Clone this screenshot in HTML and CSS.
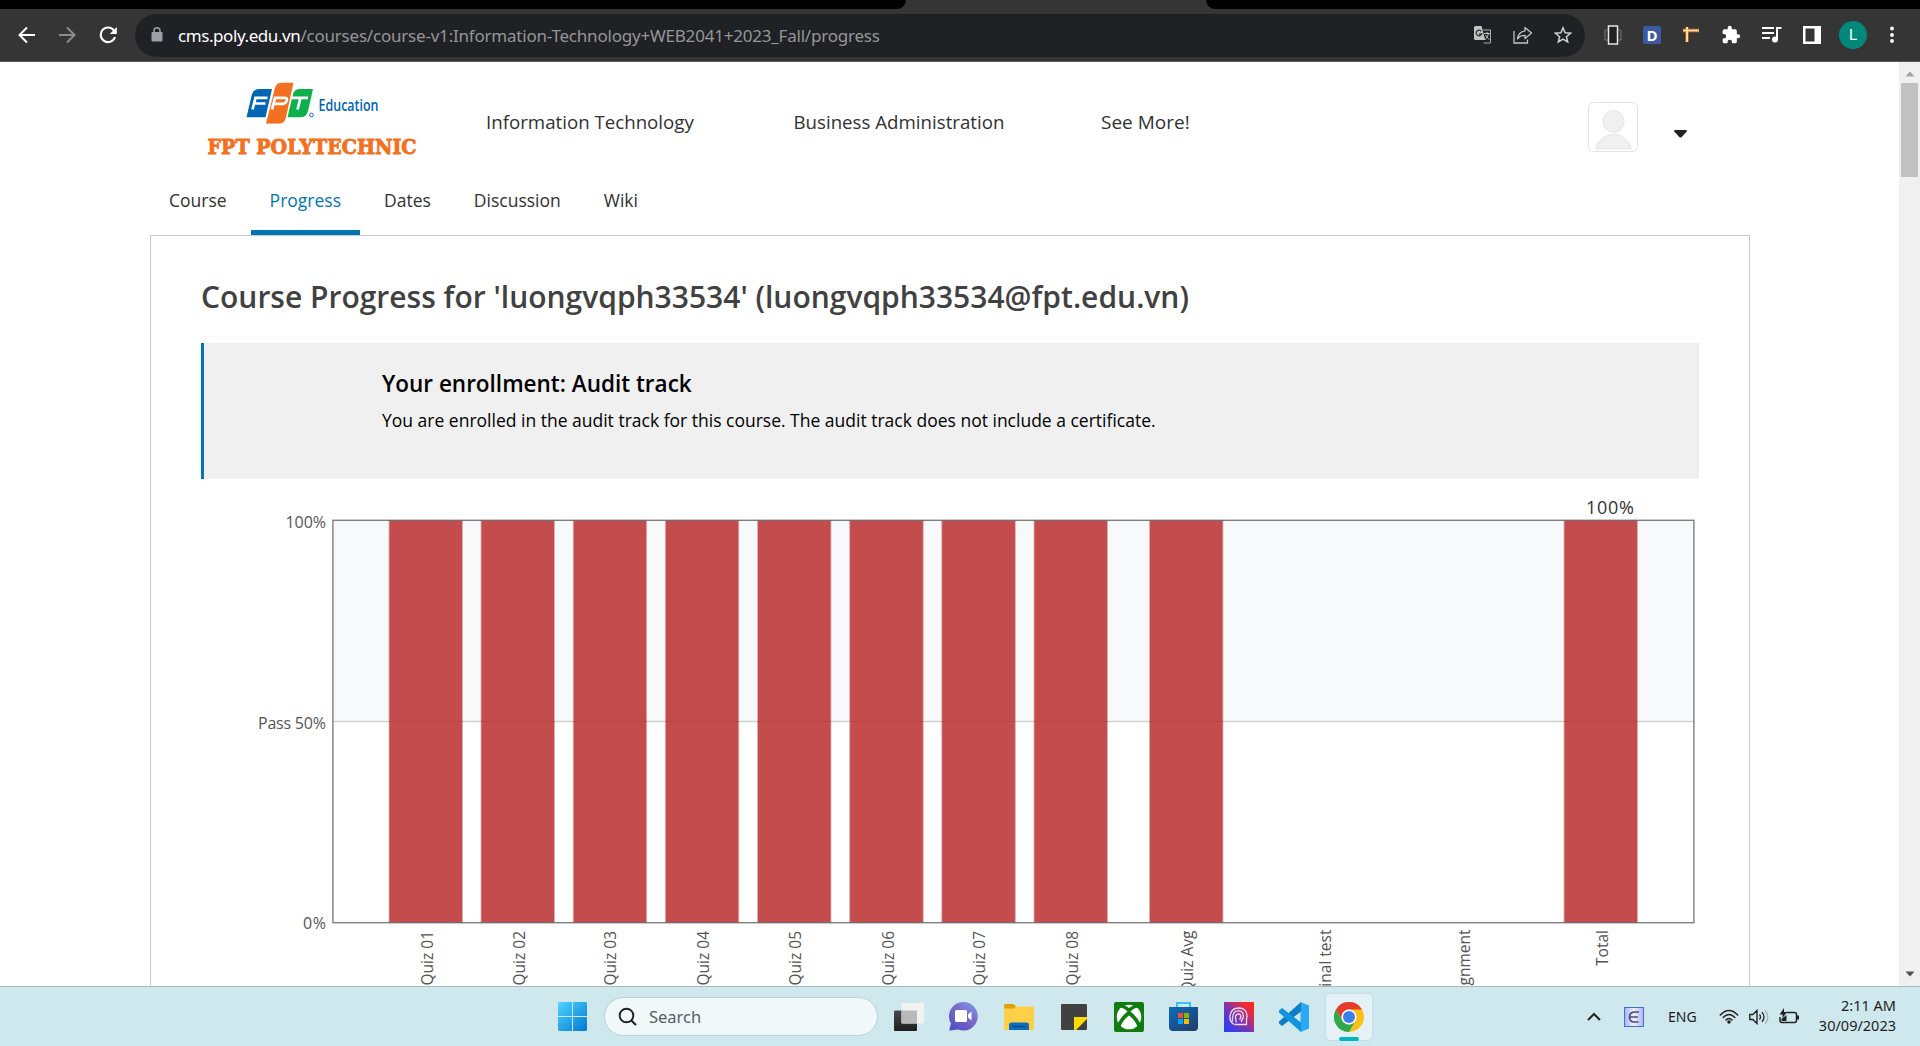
FILE: index.html
```html
<!DOCTYPE html>
<html lang="en">
<head>
<meta charset="utf-8">
<title>Progress</title>
<link rel="stylesheet" href="styles.css">
</head>
<body>
<div class="tabstrip"><div class="strip-left"></div><div class="strip-right"></div></div>
<div class="toolbar">
  <svg class="nav-back" width="18" height="18" viewBox="0 0 18 18"><path d="M17 9H2M9 1.500L1.500 9L9 16.500" fill="none" stroke="#fff" stroke-width="2"/></svg>
  <svg class="nav-fwd" width="18" height="18" viewBox="0 0 18 18"><path d="M1 9h15M9 1.500L16.500 9L9 16.500" fill="none" stroke="#8b8b8b" stroke-width="2"/></svg>
  <svg class="nav-reload" width="18" height="18" viewBox="0 0 18 18"><path d="M15.300 5A7.300 7.300 0 1 0 16 11" fill="none" stroke="#fff" stroke-width="2.100"/><path d="M17.800 1v7h-7z" fill="#fff"/></svg>
  <div class="omnibox">
    <svg width="12" height="16" viewBox="0 0 12 16"><rect x=".5" y="5" width="11" height="9.500" rx="1" fill="#9aa0a6"/><path d="M3 6V3.800a3 3 0 0 1 6 0V6" fill="none" stroke="#9aa0a6" stroke-width="1.500"/></svg>
    <div class="url"><span class="host">cms.poly.edu.vn</span>/courses/course-v1:Information-Technology+WEB2041+2023_Fall/progress</div>
    <div class="omni-icons">
      <svg width="18" height="18" viewBox="0 0 18 18"><path d="M9 4h7.500v13H9.500" fill="none" stroke="#aaa"/><path d="M1.500 0h6l3.700 14H1.500A1.500 1.500 0 0 1 0 12.500v-11A1.500 1.500 0 0 1 1.500 0z" fill="#c4c4c4"/><path d="M7.300 5.300A2.800 2.800 0 1 0 7.600 8H5" fill="none" stroke="#333" stroke-width="1.300"/><path d="M10 7.500h6M13 6v1.500M11 13.500c2-1.500 3-3.500 3.300-6M11.500 9c1 2 2.500 3.500 4 4.500" fill="none" stroke="#c4c4c4"/></svg>
      <svg width="20" height="18" viewBox="0 0 20 18"><path d="M1 5v12h13.500v-3.500" fill="none" stroke="#c4c4c4" stroke-width="1.300"/><path d="M12 1.500L18.500 7L12 12.500V9.300C8.500 9.300 6 10.500 4.500 13C5 8.500 7.500 5.500 12 4.800z" fill="none" stroke="#c4c4c4" stroke-width="1.300" stroke-linejoin="round"/></svg>
      <svg width="18" height="18" viewBox="0 0 18 18"><path d="M9 1.800l2.100 5 5.400.4-4.100 3.500 1.300 5.300L9 13.200 4.300 16l1.300-5.300L1.500 7.200l5.400-.4z" fill="none" stroke="#d0d0d0" stroke-width="1.500"/></svg>
    </div>
  </div>
  <div class="ext">
    <svg width="18" height="20" viewBox="0 0 18 20"><path d="M4 5H1v10h3M14 5h3v10h-3" fill="none" stroke="#777"/><rect x="4.500" y="1" width="9" height="18" fill="#222" stroke="#e8e8e8" stroke-width="1.500"/></svg>
    <div class="ext-d">D</div>
    <svg width="18" height="18" viewBox="0 0 18 18"><path d="M1 4.500h16M5 1v15" fill="none" stroke="#9b5b1c" stroke-width="4"/><path d="M1 4.500h16M5 1v15" fill="none" stroke="#ffd9a0" stroke-width="2"/></svg>
    <svg width="20" height="20" viewBox="0 0 24 24"><path d="M20.500 11H19V7a2 2 0 0 0-2-2h-4V3.500a2.500 2.500 0 0 0-5 0V5H4a2 2 0 0 0-2 2v3.800h1.500a2.700 2.700 0 0 1 0 5.400H2V20a2 2 0 0 0 2 2h3.800v-1.500a2.700 2.700 0 0 1 5.400 0V22H17a2 2 0 0 0 2-2v-4h1.500a2.500 2.500 0 0 0 0-5z" fill="#fff"/></svg>
    <svg width="20" height="18" viewBox="0 0 20 18"><path d="M0 2h12M0 7h12M0 12h8M19.500 2H15v11.500" fill="none" stroke="#fff" stroke-width="2"/><circle cx="13" cy="13.500" r="3" fill="#fff"/></svg>
    <svg width="18" height="18" viewBox="0 0 18 18"><path d="M0 0h18v18H0zM2.500 2.500v13h9v-13z" fill="#fff" fill-rule="evenodd"/></svg>
    <div class="profile">L</div>
    <svg width="4" height="18" viewBox="0 0 4 18"><circle cx="2" cy="2.500" r="1.900" fill="#fff"/><circle cx="2" cy="9" r="1.900" fill="#fff"/><circle cx="2" cy="15" r="1.900" fill="#fff"/></svg>
  </div>
</div>
<div class="viewport">
  <div class="page">
    <header class="site-header">
      <div class="logo">
        <svg width="216" height="86" viewBox="0 0 216 86">
          <path d="M46 12Q47.500 7 53 7H66L59.500 35.300H40.500z" fill="#0066b3"/>
          <path d="M68.500 6Q70.500 .3 76 .3H88L80.500 35Q79 42 73 42H59.500z" fill="#f37021" stroke="#fff" stroke-width=".8"/>
          <path d="M87 12Q88.500 7 94 7H107L102 29Q100.500 35.300 94 35.300H81.500z" fill="#0db14b"/>
          <path d="M46.500 27.500L49.500 15.800H61.500M48 21.500H59.500M66 27.500L69 15.800H78.500Q81.500 15.800 80.800 18.500T77 21.800H67.500M85.500 15.800H102M94.500 15.800L91.500 27.500" fill="none" stroke="#fff" stroke-width="2.700"/>
          <circle cx="105.500" cy="33" r="1.900" fill="none" stroke="#0066b3" stroke-width=".9"/>
          <text class="logo-edu" x="112.500" y="28.700" textLength="60" lengthAdjust="spacingAndGlyphs">Education</text>
          <text class="logo-poly" x="1.500" y="72.300" textLength="209" lengthAdjust="spacingAndGlyphs">FPT POLYTECHNIC</text>
        </svg>
      </div>
      <nav class="main-nav"><a class="n1">Information Technology</a><a class="n1">Business Administration</a><a class="n3">See More!</a></nav>
      <div class="user">
        <svg width="50" height="50" viewBox="0 0 50 50"><rect x=".5" y=".5" width="49" height="49" rx="5" fill="#fff" stroke="#e3e3e3"/><ellipse cx="25.500" cy="19.500" rx="10.500" ry="11" fill="#f0f0f0" stroke="#e6e6e6"/><path d="M7.500 47C10 38 17 32.500 25.500 32.500S41 38 43.500 47z" fill="#f0f0f0" stroke="#e6e6e6"/></svg>
        <svg class="caret" width="13" height="8" viewBox="0 0 13 8"><path d="M.3 0h12.400v1.500L7.300 7.500H5.700L.3 1.500z" fill="#222"/></svg>
      </div>
    </header>
    <nav class="course-tabs"><a>Course</a><a class="active">Progress</a><a>Dates</a><a>Discussion</a><a>Wiki</a></nav>
    <main class="content">
      <h1>Course Progress for 'luongvqph33534' (luongvqph33534@fpt.edu.vn)</h1>
      <section class="enroll">
        <h2>Your enrollment: Audit track</h2>
        <p>You are enrolled in the audit track for this course. The audit track does not include a certificate.</p>
      </section>
      <svg class="chart" width="1498" height="507" viewBox="201 479 1498 507">
        <rect x="333" y="520" width="1361" height="202" fill="#f8f9fb"/>
        <path d="M333 721.500H1694" stroke="#d0d1d3" stroke-width="1.300"/>
        <g class="bars">
          <rect x="389" y="520.500" width="73.500" height="402"/><rect x="481" y="520.500" width="73.500" height="402"/><rect x="573.200" y="520.500" width="73.500" height="402"/><rect x="665.300" y="520.500" width="73.500" height="402"/><rect x="757.500" y="520.500" width="73.500" height="402"/><rect x="849.700" y="520.500" width="73.500" height="402"/><rect x="941.800" y="520.500" width="73.500" height="402"/><rect x="1034" y="520.500" width="73.500" height="402"/><rect x="1149.500" y="520.500" width="73.500" height="402"/><rect x="1564" y="520.500" width="73.500" height="402"/>
        </g>
        <path d="M389 721.500h73.500m18.500 0h73.500m18.700 0h73.500m18.600 0h73.500m18.700 0h73.500m18.700 0h73.500m18.600 0h73.500m18.700 0h73.500m42 0h73.500m341 0h73.500" stroke="#b94545"/>
        <rect x="332.900" y="520.300" width="1361" height="402.400" fill="none" stroke="#545454" stroke-opacity=".75" stroke-width="1.400"/>
        <g class="ylab"><text x="326" y="528" textLength="40.500">100%</text><text x="326" y="729" textLength="68">Pass 50%</text><text x="326" y="929" textLength="23">0%</text></g>
        <text class="total" x="1586" y="513.500" textLength="48">100%</text>
        <g class="xlab">
          <text transform="translate(433 931) rotate(-90)">Quiz 01</text><text transform="translate(525 931) rotate(-90)">Quiz 02</text><text transform="translate(616 931) rotate(-90)">Quiz 03</text><text transform="translate(709 931) rotate(-90)">Quiz 04</text><text transform="translate(801 931) rotate(-90)">Quiz 05</text><text transform="translate(894 931) rotate(-90)">Quiz 06</text><text transform="translate(985 931) rotate(-90)">Quiz 07</text><text transform="translate(1078 931) rotate(-90)">Quiz 08</text><text transform="translate(1193 930.500) rotate(-90)">Quiz Avg</text><text transform="translate(1331 929.500) rotate(-90)">Final test</text><text transform="translate(1470 929.500) rotate(-90)">Assignment</text><text transform="translate(1608 930) rotate(-90)">Total</text>
        </g>
      </svg>
    </main>
  </div>
  <div class="scrollbar">
    <svg width="10" height="6" viewBox="0 0 10 6"><path d="M5 .5L9.500 5.500H.5z" fill="#a3a3a3"/></svg>
    <div class="thumb"></div>
    <svg class="down" width="10" height="6" viewBox="0 0 10 6"><path d="M5 5.500L9.500 .5H.5z" fill="#505050"/></svg>
  </div>
</div>
<footer class="taskbar">
  <div class="apps">
    <svg width="29" height="29" viewBox="0 0 29 29"><defs><linearGradient id="win" x1="0" y1="0" x2="1" y2="1"><stop offset="0" stop-color="#50d5ff"/><stop offset="1" stop-color="#0078d4"/></linearGradient></defs><path d="M1 0h13v14H0V1zM15 0h13l1 1v13H15zM0 15h14v14H1l-1-1zM15 15h14v13l-1 1H15z" fill="url(#win)"/></svg>
    <div class="search"><svg width="20" height="20" viewBox="0 0 20 20"><circle cx="8.500" cy="8.500" r="6.800" fill="none" stroke="#222" stroke-width="1.900"/><path d="M13.300 13.500L18 18" stroke="#222" stroke-width="2.200"/></svg><span>Search</span></div>
    <svg width="30" height="28" viewBox="0 0 30 28"><defs><linearGradient id="tv" x1="0" y1="0" x2="0" y2="1"><stop offset="0" stop-color="#4a4a4a"/><stop offset="1" stop-color="#1e1e1e"/></linearGradient></defs><rect y="7.500" width="23" height="20.500" rx="1" fill="url(#tv)"/><rect x="7.500" width="22.500" height="20.500" rx="1" fill="#f2f2f2"/><path d="M7.500 7.500H23v13H7.500z" fill="#b9b9b9"/></svg>
    <svg class="g25" width="29" height="29" viewBox="0 0 29 29"><defs><linearGradient id="chat" x1="1" y1="0" x2=".3" y2="1"><stop offset="0" stop-color="#7ba0f0"/><stop offset=".5" stop-color="#7a6bc8"/><stop offset="1" stop-color="#5550c4"/></linearGradient></defs><path d="M14.500 0A14.300 14.300 0 1 1 9 27.500L1 28.500Q0 28.500 .4 27.300L2 21.500A14.300 14.300 0 0 1 14.500 0z" fill="url(#chat)"/><rect x="6" y="8" width="12" height="12" rx="1.500" fill="#fff"/><path d="M19 12.500L22.500 9.500V18.500L19 15.500z" fill="#fff"/></svg>
    <svg class="g26" width="30" height="28" viewBox="0 0 30 28"><path d="M1 1h8.500l3 3-1.500 3H0V2z" fill="#dda109"/><path d="M0 5.500h10l2-2h17l1 1V26l-1 1H0z" fill="#ffcf48"/><path d="M5 27v-5a2.500 2.500 0 0 1 2.500-2.500h15A2.500 2.500 0 0 1 25 22v5z" fill="#0f6cbd"/><path d="M8 23.500h14" stroke="#084b8a" stroke-width="1.200"/></svg>
    <svg class="g27" width="26" height="26" viewBox="0 0 26 26"><rect width="26" height="26" rx="1" fill="#414141"/><path d="M13 13h13v2L15 26h-2z" fill="#ffd800"/></svg>
    <svg class="g27" width="30" height="30" viewBox="0 0 30 30"><rect width="30" height="30" rx="2" fill="#107c10"/><circle cx="15" cy="15" r="12.300" fill="#fff"/><path d="M2 25C5 18 9 13 13.500 9.500C11 7 8 5.500 5.500 5.500L8 3C11 3 13 4.500 15 6C17 4.500 19 3 22 3L24.500 5.500C22 5.500 19 7 16.500 9.500C21 13 25 18 28 25L24 25.500C22 20.500 19 16.500 15 13.500C11 16.500 8 20.500 6 25.500z" fill="#107c10"/></svg>
    <svg class="g25" width="29" height="29" viewBox="0 0 29 29"><defs><linearGradient id="st" x1="0" y1="0" x2="1" y2="1"><stop offset="0" stop-color="#0d6cc0"/><stop offset="1" stop-color="#223a66"/></linearGradient></defs><path d="M8 6V1h13v5" fill="none" stroke="#38bdf5" stroke-width="2"/><path d="M0 5h29v20a4 4 0 0 1-4 4H4a4 4 0 0 1-4-4z" fill="url(#st)"/><path d="M9 11h5v5H9z" fill="#f25022"/><path d="M15 11h5v5h-5z" fill="#7fba00"/><path d="M9 17h5v5H9z" fill="#00a4ef"/><path d="M15 17h5v5h-5z" fill="#ffb900"/></svg>
    <svg class="g26" width="30" height="30" viewBox="0 0 30 30"><defs><linearGradient id="rb" x1="0" y1="1" x2="1" y2="0"><stop offset="0" stop-color="#1744ff"/><stop offset=".45" stop-color="#7a35b5"/><stop offset=".8" stop-color="#ef2b35"/><stop offset="1" stop-color="#ff2318"/></linearGradient></defs><path d="M0 0h30v30H0z" fill="url(#rb)"/><path d="M10 22.500C3 18 5.500 6 14.500 6C22 6 24 12 22.500 17V22.500H10.500M8.500 19.500C8 9 12 8.800 14.500 8.800C20 8.800 20.500 15.500 17.500 18.500V20M12 20.500V17.500C10.500 14 12.500 12 14.500 12S18 14.500 15.500 17.500" fill="none" stroke="#f0dcf0" stroke-width="1.300"/></svg>
    <svg class="g25" width="30" height="30" viewBox="0 0 30 30"><path d="M21.500 0L30 3.500V26.500L21.500 30z" fill="#29a9f3"/><path d="M22 0L0 19.500V21.500L3 24L22 9.500z" fill="#0d7cc9"/><path d="M22 30L0 10.500V8.500L3 6L22 20.500z" fill="#1292df"/></svg>
    <div class="chrome"><svg width="30" height="30" viewBox="0 0 30 30"><circle cx="15" cy="15" r="15" fill="#fbc116"/><path d="M2 7.500A15 15 0 0 1 28 7.500H15A7.500 7.500 0 0 0 8.500 18.700z" fill="#e33b2e"/><path d="M2 7.500L8.500 18.700A7.500 7.500 0 0 0 21.500 18.700L15 30A15 15 0 0 1 2 7.500z" fill="#2da94f"/><circle cx="15" cy="15" r="7.600" fill="#fff"/><circle cx="15" cy="15" r="6" fill="#3a7ded"/></svg></div>
  </div>
  <div class="tray">
    <svg width="14" height="9" viewBox="0 0 14 9"><path d="M1 8L7 2L13 8" fill="none" stroke="#222" stroke-width="2"/></svg>
    <svg class="ime" width="20" height="20" viewBox="0 0 20 20"><defs><linearGradient id="ime" x1="0" x2="1"><stop offset="0" stop-color="#a9b4f2"/><stop offset=".5" stop-color="#f0efff"/><stop offset="1" stop-color="#a9b4f2"/></linearGradient></defs><rect x=".5" y=".5" width="19" height="19" fill="url(#ime)" stroke="#3f74cc"/><path d="M15 5H10Q5.500 5.500 5.500 10T9.500 15H14.500M6 10H14" fill="none" stroke="#4b4a80" stroke-width="1.700"/></svg>
    <span class="lang">ENG</span>
    <svg width="20" height="16" viewBox="0 0 20 16"><path d="M.8 6.500Q10-3.500 19.200 6.500M3.800 9Q10 2 16.200 9M6.500 11.500Q10 7.500 13.500 11.500" fill="none" stroke="#222" stroke-width="1.400"/><circle cx="10" cy="13" r="1.800" fill="#222"/></svg>
    <svg class="vol" width="20" height="16" viewBox="0 0 20 16"><path d="M.8 5.500h3L8 1.500v13L3.800 10.500h-3z" fill="none" stroke="#222" stroke-width="1.400"/><path d="M10.500 5.500q2 2.500 0 5M13 3.200q4 4.800 0 9.600" fill="none" stroke="#222" stroke-width="1.300"/><path d="M16 1q5.500 7 0 14" fill="none" stroke="#a5b5b9" stroke-width="1.300"/></svg>
    <svg class="vol" width="21" height="17" viewBox="0 0 21 17"><path d="M7.500 4.500H15.500a2 2 0 0 1 2 2v6a2 2 0 0 1-2 2H3a2 2 0 0 1-2-2V9" fill="none" stroke="#222" stroke-width="1.500"/><path d="M18 7.500h2v4h-2z" fill="#222"/><path d="M5 0L.5 6.500H3.500V10L8 4H5z" fill="#222"/><path d="M2.500 13V11l5-4v6z" fill="#222"/></svg>
    <div class="clock"><span>2:11 AM</span><span>30/09/2023</span></div>
  </div>
</footer>
</body>
</html>
```
FILE: styles.css
```css
* { box-sizing: border-box; }
html { height: 1046px; overflow: hidden; }
body { margin: 0; width: 1920px; height: 1046px; overflow: hidden; display: flex; flex-direction: column; background: #fff; font-family: "Open Sans", "Noto Sans", sans-serif; color: #313131; }
svg { display: block; flex: none; }
h1, h2, p { margin: 0; }
.tabstrip { height: 9px; background: #353535; display: flex; justify-content: space-between; flex: none; }
.strip-left { width: 906px; background: #000; border-radius: 0 0 9px 0; }
.strip-right { width: 714px; background: #000; border-radius: 0 0 0 9px; }
.toolbar { flex: none; height: 53px; background: #353535; border-bottom: 1px solid #5c5a5c; display: flex; align-items: center; padding-left: 18px; }
.nav-fwd { margin-left: 22px; }
.nav-reload { margin-left: 23px; }
.omnibox { width: 1450px; height: 43px; margin-left: 18px; border-radius: 22px; background: #202124; display: flex; align-items: center; padding: 0 13px 0 16px; flex: none; }
.url { margin-left: 15px; font: 17px "Noto Sans", sans-serif; color: #949699; letter-spacing: -.21px; white-space: nowrap; }
.host { color: #fff; letter-spacing: -.42px; }
.omni-icons { margin-left: auto; display: flex; gap: 21px; }
.ext { display: flex; align-items: center; margin-left: 19px; gap: 21px; }
.ext-d { width: 18px; height: 18px; border-radius: 2px; background: #3b5aa0; color: #fff; font: bold 15px/18px "Open Sans", sans-serif; text-align: center; }
.profile { width: 28px; height: 28px; border-radius: 50%; background: #00897b; color: #fff; font: 15px/29px Roboto, sans-serif; text-align: center; margin: 0 2px 0 -3px; }
.viewport { flex: none; height: 924px; display: flex; overflow: hidden; }
.page { width: 1899px; padding: 0 150px; height: 924px; }
.site-header { height: 108px; display: flex; }
.logo { padding: 20px 0 0 56px; }
.logo-edu { font: 600 15.500px "Open Sans", sans-serif; fill: #0066b3; }
.logo-poly { font: bold 21px "DejaVu Serif", serif; fill: #f37021; stroke: #f37021; stroke-width: .9; }
.main-nav { display: flex; padding: 46px 0 0 64px; font-size: 18.700px; line-height: 28px; white-space: nowrap; }
.n1 { width: 307.500px; }
.n3 { font-size: 19px; }
.user { margin-left: auto; padding: 40px 62px 0 0; display: flex; align-items: flex-start; gap: 36px; }
.caret { margin-top: 28px; }
.course-tabs { height: 65px; display: flex; gap: 5px; font-size: 17.500px; }
.course-tabs a { padding: 18px 19px 0; height: 65px; line-height: 24px; }
.course-tabs .active { color: #0075b4; border-bottom: 5px solid #0075b4; }
.content { width: 1600px; height: 760px; border: 1px solid #c8c8c8; padding: 41px 0 0 50px; }
h1 { font-size: 30px; line-height: 40px; font-weight: 600; color: #414141; white-space: nowrap; }
.enroll { width: 1498px; height: 136px; margin-top: 26px; border-left: 3px solid #0075b4; background: #f0f0f0; padding: 25px 0 0 178px; color: #000; white-space: nowrap; }
.enroll h2 { font-size: 22.500px; line-height: 32px; font-weight: 600; }
.enroll p { font-size: 17.500px; line-height: 24px; margin-top: 8px; }
.bars { fill: #c44c4c; stroke: #d9b3b3; stroke-width: .8; }
.ylab { font-size: 16px; fill: #555; text-anchor: end; }
.total { font-size: 18px; fill: #333; }
.xlab { font-size: 15.500px; fill: #545454; text-anchor: end; }
.scrollbar { width: 21px; background: #f0f0f0; display: flex; flex-direction: column; align-items: center; padding: 9px 0; flex: none; }
.thumb { width: 17px; height: 94px; background: #c1c1c1; margin-top: 6px; }
.down { margin-top: auto; }
.taskbar { flex: none; height: 60px; background: #cfe8ee; border-top: 1px solid #a5bdc2; display: flex; justify-content: space-between; padding: 0 24px 0 558px; font-family: "Noto Sans", sans-serif; color: #1d1d1d; }
.apps { display: flex; align-items: center; }
.search { width: 274px; height: 39px; margin: 0 16px 0 17px; border-radius: 20px; background: #f0f8fa; border: 1px solid #b9d2d7; display: flex; align-items: center; padding-left: 13px; gap: 11px; font-size: 16.500px; color: #575d5f; }
.g25 { margin-left: 25px; }
.g26 { margin-left: 26px; }
.g27 { margin-left: 27px; }
.chrome { width: 48px; height: 48px; margin-left: 16px; border-radius: 5px; background: #e4f2f7; border: 1px solid #c6dde4; display: flex; flex-direction: column; align-items: center; padding-top: 8px; }
.chrome::after { content: ""; width: 20px; height: 4px; border-radius: 2px; background: #00b7c3; margin-top: 5px; flex: none; }
.tray { display: flex; align-items: center; }
.ime { margin: 0 24px 0 23px; }
.lang { font-size: 14px; width: 51px; }
.vol { margin-left: 10px; }
.clock { display: flex; flex-direction: column; align-items: flex-end; width: 96px; padding-bottom: 4px; font-size: 14.500px; line-height: 20px; }
```
